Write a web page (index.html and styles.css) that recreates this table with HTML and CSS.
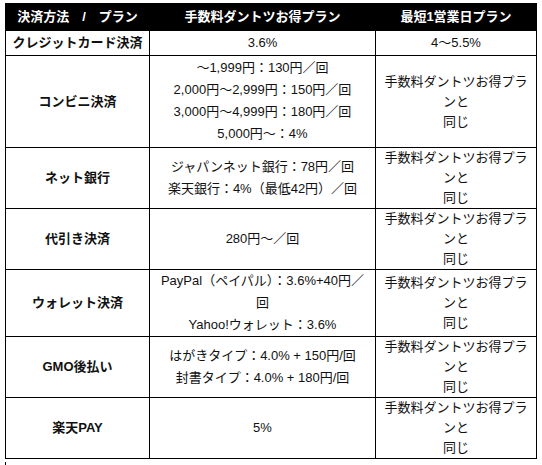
FILE: index.html
```html
<!DOCTYPE html>
<html lang="ja">
<head>
<meta charset="utf-8">
<link rel="stylesheet" href="styles.css">
</head>
<body>
<div class="wrap">
<table class="fees">
  <colgroup>
    <col class="c1"><col class="c2"><col class="c3">
  </colgroup>
  <thead>
    <tr><th>決済方法　/　プラン</th><th>手数料ダントツお得プラン</th><th>最短1営業日プラン</th></tr>
  </thead>
  <tbody>
    <tr class="r-credit"><td class="name">クレジットカード決済</td><td class="mid">3.6%</td><td class="right">4〜5.5%</td></tr>
    <tr><td class="name">コンビニ決済</td><td class="mid conv">〜1,999円：130円／回<br>2,000円〜2,999円：150円／回<br>3,000円〜4,999円：180円／回<br>5,000円〜：4%</td><td class="right">手数料ダントツお得プランと<br>同じ</td></tr>
    <tr><td class="name">ネット銀行</td><td class="mid">ジャパンネット銀行：78円／回<br>楽天銀行：4%（最低42円）／回</td><td class="right">手数料ダントツお得プランと<br>同じ</td></tr>
    <tr><td class="name">代引き決済</td><td class="mid">280円〜／回</td><td class="right">手数料ダントツお得プランと<br>同じ</td></tr>
    <tr><td class="name">ウォレット決済</td><td class="mid">PayPal（ペイパル）：3.6%+40円／回<br>Yahoo!ウォレット：3.6%</td><td class="right">手数料ダントツお得プランと<br>同じ</td></tr>
    <tr><td class="name">GMO後払い</td><td class="mid">はがきタイプ：4.0% + 150円/回<br>封書タイプ：4.0% + 180円/回</td><td class="right">手数料ダントツお得プランと<br>同じ</td></tr>
    <tr><td class="name">楽天PAY</td><td class="mid">5%</td><td class="right">手数料ダントツお得プランと<br>同じ</td></tr>
  </tbody>
</table>
<div class="next"></div>
</div>
</body>
</html>
```
FILE: styles.css
```css
html, body {
  margin: 0;
  padding: 0;
  background: #fff;
}
body {
  font-family: "Liberation Sans", "Noto Sans CJK JP", sans-serif;
  font-size: 13px;
  color: #111;
}
.wrap {
  padding: 3px 0 0 5px;
}
.fees {
  border-collapse: collapse;
  width: 531px;
  table-layout: fixed;
}
.c1 { width: 144px; }
.c2 { width: 226px; }
.c3 { width: 161px; }
.fees th {
  background: #000;
  color: #fff;
  font-weight: bold;
  font-size: 13px;
  line-height: 26px;
  padding: 0 4px;
  border: 1px solid #000;
  text-align: center;
}
.fees td {
  border: 1px solid #000;
  text-align: center;
  vertical-align: middle;
  padding: 0 6px;
}
.fees td.name {
  font-weight: bold;
  line-height: 24px;
}
.fees td.mid {
  line-height: 22px;
}
.fees td.conv {
  padding-top: 1px;
  padding-bottom: 2px;
}
.fees td.right {
  line-height: 20px;
}
.next {
  margin-top: 3px;
  height: 10px;
  border-left: 1px solid #000;
}
```
